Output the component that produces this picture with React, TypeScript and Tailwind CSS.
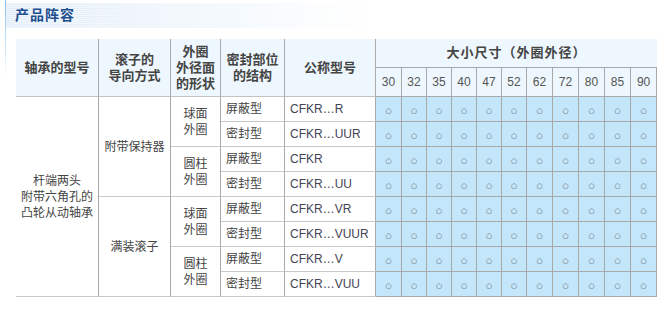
import React from 'react';

const sizes = ['30', '32', '35', '40', '47', '52', '62', '72', '80', '85', '90'];
const sizeWidths = [26, 25, 25, 25, 25, 25, 26, 26, 26, 26, 26];

const rows = [
  { seal: '屏蔽型', model: 'CFKR…R' },
  { seal: '密封型', model: 'CFKR…UUR' },
  { seal: '屏蔽型', model: 'CFKR' },
  { seal: '密封型', model: 'CFKR…UU' },
  { seal: '屏蔽型', model: 'CFKR…VR' },
  { seal: '密封型', model: 'CFKR…VUUR' },
  { seal: '屏蔽型', model: 'CFKR…V' },
  { seal: '密封型', model: 'CFKR…VUU' },
];

const cjk = { fontFamily: '"Liberation Sans", "Noto Sans CJK SC", sans-serif' };

const SizeCells: React.FC = () => (
  <>
    {sizes.map((s) => (
      <td
        key={s}
        className="bg-[#c3e6fb] border-r border-b border-[#a9a9a9] text-center align-middle p-0"
      >
        <span
          className="text-[7px] leading-none text-[#555]"
          style={{ fontFamily: '"DejaVu Sans", sans-serif' }}
        >
          ○
        </span>
      </td>
    ))}
  </>
);

export default function App() {
  return (
    <div className="w-[669px] h-[312px] bg-white flex overflow-hidden" style={cjk}>
      <div className="w-[5px] shrink-0" />
      <div className="w-[1px] h-[80px] shrink-0 bg-gradient-to-b from-[#86c0f0] to-white" />
      <div className="flex-1 flex flex-col">
        <div className="mt-[3px] h-[25px] flex items-center pl-[9px] bg-[repeating-linear-gradient(to_bottom,rgba(255,255,255,0.45)_0px,rgba(255,255,255,0.45)_1px,transparent_1px,transparent_2px),linear-gradient(to_right,#e2edf8,#f3f8fd_35%,#ffffff_55%)]">
          <span className="text-[14px] font-bold text-[#1f4f8f] tracking-[1px]">产品阵容</span>
        </div>

        <table
          className="ml-[10px] mt-[11px] table-fixed w-[641px] border-separate border-spacing-0 text-[12px] text-[#444]"
        >
          <colgroup>
            <col className="w-[83px]" />
            <col className="w-[72px]" />
            <col className="w-[50px]" />
            <col className="w-[64px]" />
            <col className="w-[91px]" />
            {sizeWidths.map((w, i) => (
              <col key={i} style={{ width: w }} />
            ))}
          </colgroup>
          <thead>
            <tr className="h-[29px]">
              <th rowSpan={2} className="bg-[#eef7fd] border-r border-r-[#a9a9a9] border-b border-b-[#c4c4c4] text-[13px] font-bold text-[#444]">
                轴承的型号
              </th>
              <th rowSpan={2} className="bg-[#eef7fd] border-r border-r-[#a9a9a9] border-b border-b-[#c4c4c4] text-[13px] font-bold leading-[16px] text-[#444]">
                滚子的<br />导向方式
              </th>
              <th rowSpan={2} className="bg-[#eef7fd] border-r border-r-[#a9a9a9] border-b border-b-[#c4c4c4] text-[13px] font-bold leading-[16px] text-[#444]">
                外圈<br />外径面<br />的形状
              </th>
              <th rowSpan={2} className="bg-[#eef7fd] border-r border-r-[#a9a9a9] border-b border-b-[#c4c4c4] text-[13px] font-bold leading-[16px] text-[#444]">
                密封部位<br />的结构
              </th>
              <th rowSpan={2} className="bg-[#eef7fd] border-r border-r-[#a9a9a9] border-b border-b-[#c4c4c4] text-[13px] font-bold text-[#444]">
                公称型号
              </th>
              <th colSpan={11} className="bg-[#eef7fd] border-b border-b-[#a9a9a9] text-[13px] font-bold text-[#444] tracking-[1px]">
                大小尺寸（外圈外径）
              </th>
            </tr>
            <tr className="h-[29px]">
              {sizes.map((s) => (
                <th
                  key={s}
                  className="bg-[#eef7fd] border-r border-b border-[#a9a9a9] font-normal text-[12px] text-[#555]"
                >
                  {s}
                </th>
              ))}
            </tr>
          </thead>
          <tbody>
            {rows.map((r, i) => (
              <tr key={i} className="h-[25px]">
                {i === 0 && (
                  <td rowSpan={8} className="border-r border-r-[#a9a9a9] border-b border-b-[#c8c8c8] text-center leading-[16px]">
                    杆端两头<br />附带六角孔的<br />凸轮从动轴承
                  </td>
                )}
                {i % 4 === 0 && (
                  <td rowSpan={4} className="border-r border-r-[#a9a9a9] border-b border-b-[#c8c8c8] text-center">
                    {i === 0 ? '附带保持器' : '满装滚子'}
                  </td>
                )}
                {i % 2 === 0 && (
                  <td rowSpan={2} className="border-r border-r-[#a9a9a9] border-b border-b-[#c8c8c8] text-center leading-[16px]">
                    {i % 4 === 0 ? (
                      <>球面<br />外圈</>
                    ) : (
                      <>圆柱<br />外圈</>
                    )}
                  </td>
                )}
                <td className="border-r border-r-[#a9a9a9] border-b border-b-[#c8c8c8] pl-[5px]">
                  {r.seal}
                </td>
                <td className="border-r border-r-[#a9a9a9] border-b border-b-[#c8c8c8] pl-[5px] text-[#445]">
                  {r.model}
                </td>
                <SizeCells />
              </tr>
            ))}
          </tbody>
        </table>
      </div>
    </div>
  );
}
